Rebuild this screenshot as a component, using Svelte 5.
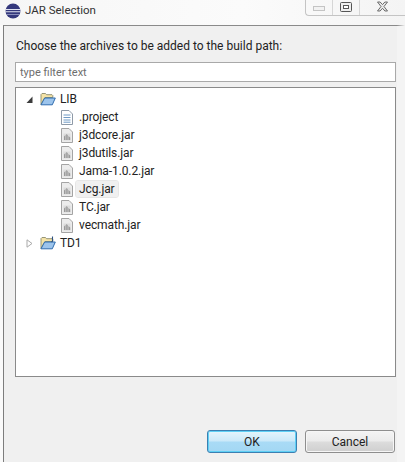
<script lang="ts">
  interface Row {
    name: string
    kind: 'folder' | 'project' | 'file' | 'jar'
    depth: number
    open?: boolean
    selected?: boolean
  }

  const rows: Row[] = [
    { name: 'LIB', kind: 'folder', depth: 0, open: true },
    { name: '.project', kind: 'file', depth: 1 },
    { name: 'j3dcore.jar', kind: 'jar', depth: 1 },
    { name: 'j3dutils.jar', kind: 'jar', depth: 1 },
    { name: 'Jama-1.0.2.jar', kind: 'jar', depth: 1 },
    { name: 'Jcg.jar', kind: 'jar', depth: 1, selected: true },
    { name: 'TC.jar', kind: 'jar', depth: 1 },
    { name: 'vecmath.jar', kind: 'jar', depth: 1 },
    { name: 'TD1', kind: 'project', depth: 0 }
  ]
</script>

<div class="page">
  <header class="titlebar">
    <svg class="app-icon" width="16" height="16" viewBox="0 0 16 16">
      <circle cx="8" cy="8" r="7.500" fill="#34387c" />
      <path d="M.8 6h14.400v1H.8zM.5 8.300h15v1H.5z" fill="#dfe2f0" />
      <path d="M1.500 11h13v.7h-13z" fill="#aeb2d6" />
    </svg>
    <span class="title">JAR Selection</span>
    <div class="controls">
      <div class="ctl">
        <svg width="12" height="5" viewBox="0 0 12 5">
          <rect x=".5" y=".5" width="11" height="4" fill="#f2f2f2" stroke="#c4c4c4" />
        </svg>
      </div>
      <div class="ctl">
        <svg width="12" height="10" viewBox="0 0 12 10">
          <rect x=".5" y=".5" width="11" height="9" rx="1" fill="#eee" stroke="#555" />
          <rect x="3.500" y="3.500" width="5" height="3" fill="#fff" stroke="#555" />
        </svg>
      </div>
      <div class="ctl close">
        <svg width="13" height="11" viewBox="0 0 13 11">
          <path d="M1.500 1h2.600l2.400 2.600L8.900 1h2.600L8 5.500l3.500 4.500H8.900L6.500 7.300 4.100 10H1.500L5 5.500z" fill="#e8e8e8" stroke="#5d5d5d" stroke-width=".9" stroke-linejoin="round" />
        </svg>
      </div>
    </div>
  </header>

  <main class="dialog">
    <p class="message">Choose the archives to be added to the build path:</p>
    <input class="filter" type="text" placeholder="type filter text" />

    <div class="tree">
      {#each rows as row}
        <div class="row" class:nested={row.depth > 0}>
          {#if row.depth === 0}
            <svg class="twisty" width="7" height="9" viewBox="0 0 7 9">
              {#if row.open}
                <path d="M6.500 1.500v6.500H.5z" fill="#3c3c3c" />
              {:else}
                <path d="M1 .8 6 4.500 1 8.200z" fill="#fff" stroke="#a9a9a9" />
              {/if}
            </svg>
          {/if}

          {#if row.kind === 'folder' || row.kind === 'project'}
            <svg class="icon" width="16" height="14" viewBox="0 0 16 14">
              <path d="M1 12.500V2.500l1-1h3.500l1 1.200H12l.8.800v2H5L1 12.500z" fill="#f5e3a6" stroke="#8a8a6c" stroke-width=".9" />
              <path d="M1 12.800 4.600 6h10.700l-3 6.800z" fill="#9cc4ec" stroke="#2f6cae" stroke-width="1" />
              {#if row.kind === 'project'}
                <path d="M12.500 .5v4.200q0 1.100-1.200 1.100" fill="none" stroke="#2f5382" stroke-width="1.100" />
              {/if}
            </svg>
          {:else if row.kind === 'file'}
            <svg class="icon" width="12" height="15" viewBox="0 0 12 15">
              <path d="M.5.5h7.500l3.500 3.500v10.500H.5z" fill="#fff" stroke="#8e9aa8" />
              <path d="M2.500 5h7M2.500 7.500h7M2.500 10h7M2.500 12.200h7" stroke="#6f9ac6" />
            </svg>
          {:else}
            <svg class="icon" width="12" height="15" viewBox="0 0 12 15">
              <path d="M.5.5h7.500l3.500 3.500v10.500H.5z" fill="#ececec" stroke="#a4a4a4" />
              <path d="M2.500 5.500h7v7h-7z" fill="#dcdcdc" />
              <path d="M3 12V8.500l1.500-1.500v5zM5.200 12V6l1.500 1v5zM7.400 12V8l1.800 1.500V12z" fill="#9a9a9a" />
            </svg>
          {/if}

          <span class="name" class:selected={row.selected}>{row.name}</span>
        </div>
      {/each}
    </div>

    <footer class="buttons">
      <button class="btn primary" type="button">OK</button>
      <button class="btn" type="button">Cancel</button>
    </footer>
  </main>
</div>

<style>
  :global(body) {
    margin: 0;
    background: #fafafa;
  }

  .page {
    width: 405px;
    height: 462px;
    display: flex;
    flex-direction: column;
    overflow: hidden;
    font-family: Roboto, "Noto Sans", sans-serif;
    font-size: 12px;
    color: #222;
  }

  .titlebar {
    height: 25px;
    flex-shrink: 0;
    display: flex;
    align-items: flex-start;
    padding-left: 5px;
    box-sizing: border-box;
    background: linear-gradient(90deg, #f6f6f6, #fbfbfb 60%, #f4f4f4);
  }

  .app-icon {
    margin-top: 3px;
  }

  .title {
    margin: 2px 0 0 4px;
    line-height: 17px;
    font-size: 11.500px;
    color: #333;
    flex: 1;
  }

  .controls {
    display: flex;
    height: 15px;
    border: 1px solid #c4c4c4;
    border-top: 0;
    border-right: 0;
    border-bottom-left-radius: 4px;
  }

  .ctl {
    width: 27px;
    display: flex;
    align-items: flex-start;
    justify-content: center;
    padding-top: 2px;
    box-sizing: border-box;
    border-right: 1px solid #d6d6d6;
  }

  .ctl:first-child svg {
    margin-top: 4px;
  }

  .ctl.close {
    width: 45px;
    border-right: 0;
    padding-top: 1px;
  }

  .dialog {
    flex: 1;
    min-height: 0;
    display: flex;
    flex-direction: column;
    margin-left: 3px;
    padding: 12px 1px 9px 11px;
    border-left: 1px solid #7d7d7d;
    border-top: 1px solid #8a8a8a;
    border-right: 8px solid #f4f4f4;
    background: #f0f0f0;
  }

  .message {
    margin: 0 0 7px 1px;
    line-height: 17px;
    color: #222;
  }

  .filter {
    height: 20px;
    box-sizing: border-box;
    border: 1px solid #a9a9a9;
    padding: 0 4px;
    background: #fff;
    font: inherit;
    font-size: 11px;
    outline: none;
  }

  .filter::placeholder {
    color: #6e6e6e;
    opacity: 1;
  }

  .tree {
    height: 290px;
    box-sizing: border-box;
    margin-top: 5px;
    padding: 2px 0 0 10px;
    border: 1px solid #8a8a8a;
    background: #fff;
  }

  .row {
    height: 18px;
    display: flex;
    align-items: center;
  }

  .row.nested {
    padding-left: 35px;
  }

  .twisty {
    margin-right: 7px;
  }

  .icon {
    flex-shrink: 0;
  }

  .name {
    margin-left: 3px;
    padding: 0 3px;
    line-height: 16px;
    letter-spacing: -0.1px;
    border-radius: 2px;
    color: #222;
  }

  .row:not(.nested) .name {
    margin-left: 1px;
    padding-left: 3px;
  }

  .name.selected {
    background: #f0f0f0;
    outline: 1px solid #e6e6e6;
  }

  .buttons {
    margin-top: auto;
    padding-right: 1px;
    display: flex;
    justify-content: flex-end;
    gap: 8px;
  }

  .btn {
    width: 90px;
    height: 23px;
    padding: 0;
    border: 1px solid #8e8e8e;
    border-radius: 3px;
    background: linear-gradient(#f4f4f4 0%, #ebebeb 48%, #dcdcdc 52%, #cfcfcf 100%);
    font: inherit;
    color: #222;
    box-shadow: inset 0 0 0 1px #f6f6f6;
  }

  .btn.primary {
    border-color: #3c7fb1;
    background: linear-gradient(#e5f5fc 0%, #cbe9f9 48%, #a9dbf6 52%, #a3d7f3 100%);
    box-shadow: inset 0 0 0 1px #5fd0f5;
  }
</style>
